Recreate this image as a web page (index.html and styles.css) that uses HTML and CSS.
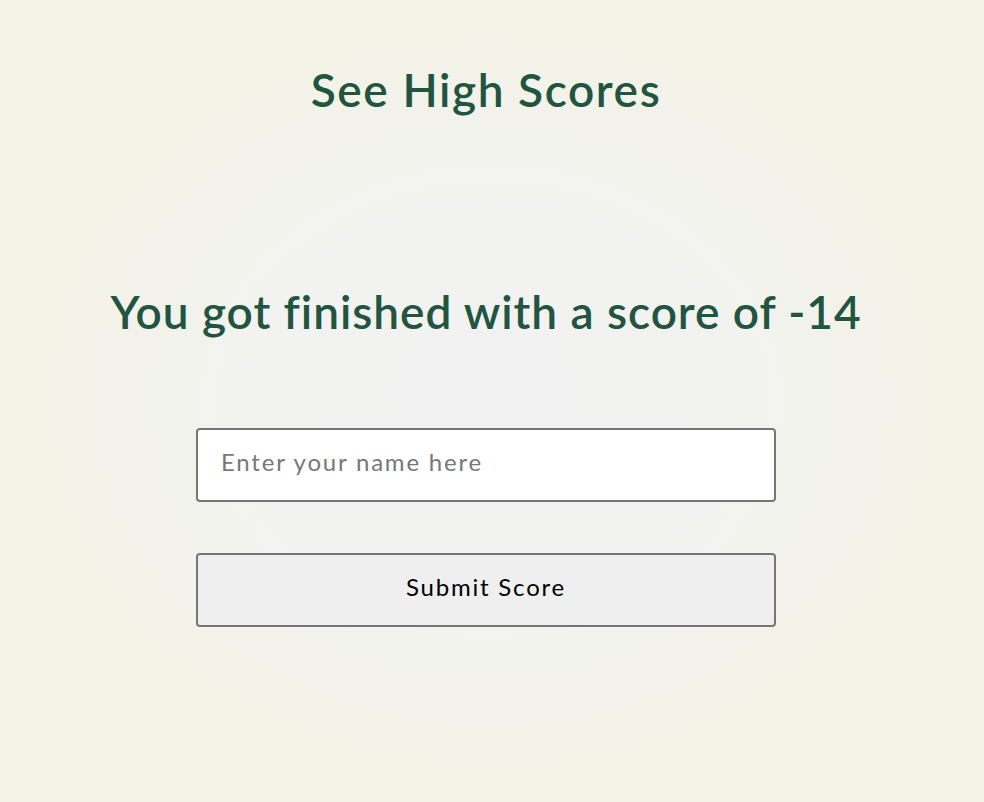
FILE: index.html
```html
<!DOCTYPE html>
<html lang="en">
<head>
<meta charset="utf-8">
<title>Quiz Finished</title>
<link rel="stylesheet" href="styles.css">
</head>
<body>
<main class="page">
  <a class="high-scores" href="#">See High Scores</a>
  <h1 class="result">You got finished with a score of -14</h1>
  <form class="score-form">
    <input class="name-input" type="text" placeholder="Enter your name here">
    <button class="submit-btn" type="button">Submit Score</button>
  </form>
</main>
</body>
</html>
```
FILE: styles.css
```css
html, body {
  margin: 0;
  padding: 0;
}
body {
  min-height: 100vh;
  background: radial-gradient(ellipse closest-side at center, #f2f2f2 0%, #f2f2f1 45%, #f3f3e6 100%);
  background-color: #f3f3e5;
  font-family: "Lato", "Open Sans", sans-serif;
}
.page {
  display: flex;
  flex-direction: column;
  align-items: center;
  padding-top: 58px;
  padding-right: 12px;
}
.high-scores {
  color: #21553f;
  text-decoration: none;
  font-size: 46px;
  line-height: 64px;
  font-weight: 600;
  letter-spacing: 1.6px;
}
.result {
  color: #21553f;
  font-size: 46px;
  font-weight: 600;
  line-height: 64px;
  letter-spacing: 0.95px;
  margin: 158px 0 0;
}
.score-form {
  display: flex;
  flex-direction: column;
  gap: 51px;
  margin-top: 84px;
  width: 580px;
}
.name-input,
.submit-btn {
  box-sizing: border-box;
  height: 74px;
  width: 100%;
  border: 2px solid #767676;
  border-radius: 4px;
  font-family: inherit;
  font-size: 24px;
  letter-spacing: 1.8px;
  padding-bottom: 8px;
}
.name-input {
  background: #fff;
  padding-left: 23px;
  padding-right: 23px;
  color: #222;
}
.name-input::placeholder {
  color: #777;
}
.submit-btn {
  background: #efefef;
  color: #000;
}
```
